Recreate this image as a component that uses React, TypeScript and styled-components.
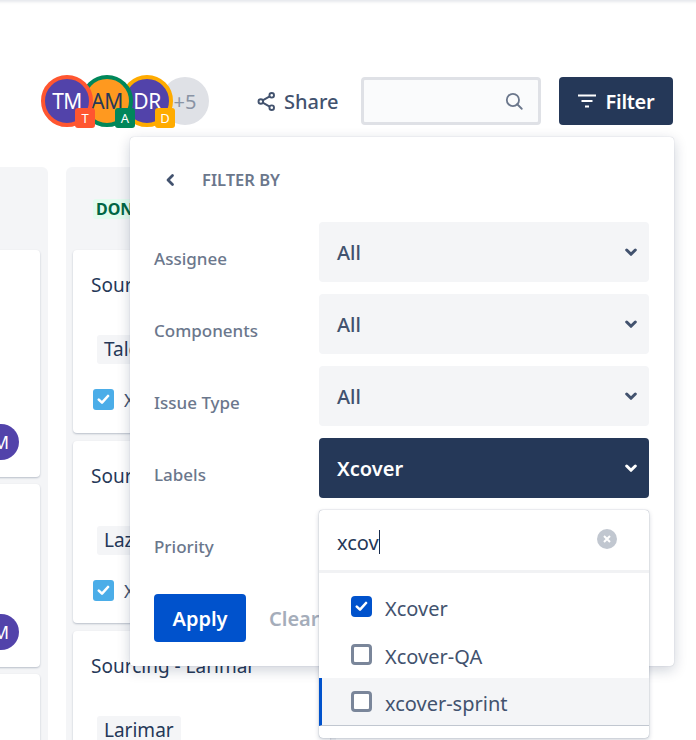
import React from 'react';
import styled, { createGlobalStyle } from 'styled-components';

const GlobalStyle = createGlobalStyle`
	html, body {
		margin: 0;
		padding: 0;
		background: #fff;
		overflow: hidden;
	}
	body {
		font-family: 'Noto Sans', 'Open Sans', sans-serif;
	}
`;

const Page = styled.div`
	position: relative;
	width: 696px;
	height: 740px;
	overflow: hidden;
	background: #fff;
	box-shadow: inset 0 5px 3px -3px rgba(9, 30, 66, 0.1);
`;

const TopBar = styled.div`
	display: flex;
	align-items: center;
	height: 48px;
	padding: 77px 23px 0 41px;
`;

const AvatarGroup = styled.div`
	display: flex;
	align-items: center;
`;

const AvatarRing = styled.div<{ $ring: string; $fill: string; $dark?: boolean; $z: number }>`
	position: relative;
	z-index: ${(p) => p.$z};
	flex: none;
	box-sizing: border-box;
	width: 52px;
	height: 52px;
	margin-right: -12px;
	border: 4px solid ${(p) => p.$ring};
	border-radius: 50%;
	background: ${(p) => p.$fill};
	color: ${(p) => (p.$dark ? '#253858' : '#fff')};
	display: flex;
	align-items: center;
	justify-content: center;
	font-size: 21px;
	letter-spacing: -0.5px;
`;

const AvatarBadge = styled.span<{ $bg: string }>`
	position: absolute;
	right: -6px;
	bottom: -5px;
	width: 20px;
	height: 20px;
	border-radius: 3px;
	background: ${(p) => p.$bg};
	color: #fff;
	font-size: 13px;
	display: flex;
	align-items: center;
	justify-content: center;
	letter-spacing: 0;
`;

const MoreAvatar = styled.div`
	flex: none;
	width: 48px;
	height: 48px;
	border-radius: 50%;
	background: #dfe1e6;
	color: #8993a4;
	font-size: 20px;
	display: flex;
	align-items: center;
	justify-content: center;
`;

const ShareButton = styled.div`
	flex: none;
	box-sizing: border-box;
	width: 152px;
	padding-left: 48px;
	display: flex;
	align-items: center;
	gap: 8px;
	color: #42526e;
	font-size: 20px;
	font-weight: 500;
`;

const SearchBox = styled.div`
	flex: none;
	box-sizing: border-box;
	width: 180px;
	height: 48px;
	padding-right: 15px;
	background: #fafbfc;
	border: 3px solid #dfe1e6;
	border-radius: 4px;
	display: flex;
	align-items: center;
	justify-content: flex-end;
	color: #6b778c;
`;

const FilterButton = styled.div`
	flex: none;
	box-sizing: border-box;
	width: 114px;
	height: 48px;
	margin-left: 18px;
	background: #253858;
	border-radius: 4px;
	color: #fff;
	font-size: 20px;
	font-weight: 600;
	letter-spacing: -0.3px;
	display: flex;
	align-items: center;
	justify-content: center;
	gap: 10px;
`;

const Board = styled.div`
	display: flex;
	gap: 18px;
	margin-top: 42px;
	margin-left: -30px;
`;

const SideColumn = styled.div`
	flex: none;
	box-sizing: border-box;
	width: 78px;
	height: 620px;
	padding: 83px 8px 0 0;
	background: #f4f5f7;
	border-radius: 6px;
	display: flex;
	flex-direction: column;
	gap: 7px;
`;

const MainColumn = styled.div`
	flex: none;
	box-sizing: border-box;
	width: 270px;
	height: 620px;
	padding: 0 6px 0 7px;
	background: #f4f5f7;
	border-radius: 6px;
	display: flex;
	flex-direction: column;
	gap: 8px;
`;

const ColumnTitle = styled.div`
	flex: none;
	height: 75px;
	display: flex;
	align-items: center;
`;

const DoneLozenge = styled.span`
	margin-left: 20px;
	margin-top: 8px;
	padding: 0 3px;
	line-height: 20px;
	background: #e3fcef;
	color: #006644;
	font-size: 16px;
	font-weight: 700;
	border-radius: 3px;
`;

const Card = styled.div<{ $h: number }>`
	flex: none;
	box-sizing: border-box;
	position: relative;
	height: ${(p) => p.$h}px;
	background: #fff;
	border-radius: 4px;
	box-shadow: 0 1px 2px rgba(9, 30, 66, 0.25);
	padding: 20px 18px 0;
	color: #172b4d;
`;

const CardAvatar = styled.span`
	position: absolute;
	right: 21px;
	bottom: 17px;
	width: 36px;
	height: 36px;
	border-radius: 50%;
	background: #5243aa;
	color: #fff;
	font-size: 18px;
	display: flex;
	align-items: center;
	justify-content: center;
`;

const CardTitle = styled.div`
	font-size: 19px;
	line-height: 30px;
	color: #253858;
	white-space: nowrap;
`;

const CardTag = styled.span`
	display: inline-block;
	margin-top: 35px;
	margin-left: 6px;
	padding: 0 7px;
	background: #f4f5f7;
	border-radius: 3px;
	color: #253858;
	font-size: 19px;
	line-height: 29px;
`;

const CardKey = styled.div`
	display: flex;
	align-items: center;
	gap: 10px;
	margin-top: 25px;
	margin-left: 2px;
	height: 21px;
	color: #42526e;
	font-size: 18px;
`;

const StoryCheck = styled.span`
	width: 21px;
	height: 21px;
	border-radius: 3px;
	background: #4bade8;
	color: #fff;
	display: flex;
	align-items: center;
	justify-content: center;
`;

const Popover = styled.div`
	position: absolute;
	left: 130px;
	top: 137px;
	box-sizing: border-box;
	width: 544px;
	height: 529px;
	background: #fff;
	border-radius: 4px;
	box-shadow: 0 0 1px rgba(9, 30, 66, 0.3), 0 4px 14px rgba(9, 30, 66, 0.2);
	padding: 0 24px;
`;

const PopoverHeader = styled.div`
	display: flex;
	align-items: center;
	height: 85px;
	padding-left: 10px;
	gap: 26px;
	color: #42526e;
`;

const PopoverTitle = styled.span`
	color: #6b778c;
	font-size: 16.5px;
	font-weight: 600;
`;

const FieldRow = styled.div`
	display: grid;
	grid-template-columns: 165px 330px;
	align-items: center;
	height: 60px;
	margin-bottom: 12px;
`;

const FieldLabel = styled.span`
	color: #6b778c;
	font-size: 17px;
	font-weight: 500;
	padding-top: 12px;
`;

const SelectBox = styled.div<{ $active?: boolean }>`
	height: 60px;
	box-sizing: border-box;
	padding: 0 12px 0 18px;
	border-radius: 4px;
	background: ${(p) => (p.$active ? '#253858' : '#f4f5f7')};
	color: ${(p) => (p.$active ? '#fff' : '#42526e')};
	font-size: 20px;
	font-weight: ${(p) => (p.$active ? 600 : 500)};
	display: flex;
	align-items: center;
	justify-content: space-between;
`;

const Actions = styled.div`
	display: flex;
	align-items: center;
	gap: 23px;
	margin-top: 24px;
`;

const ApplyButton = styled.div`
	width: 92px;
	height: 48px;
	border-radius: 4px;
	background: #0052cc;
	color: #fff;
	font-size: 20px;
	font-weight: 600;
	display: flex;
	align-items: center;
	justify-content: center;
`;

const ClearButton = styled.div`
	color: #a5adba;
	font-size: 20px;
	font-weight: 600;
`;

const Dropdown = styled.div`
	position: absolute;
	left: 319px;
	top: 510px;
	box-sizing: border-box;
	width: 330px;
	height: 228px;
	background: #fff;
	border-radius: 4px;
	box-shadow: 0 0 1px rgba(9, 30, 66, 0.5), 0 2px 5px rgba(9, 30, 66, 0.2);
`;

const DropdownSearch = styled.div`
	display: flex;
	align-items: center;
	justify-content: space-between;
	height: 60px;
	padding: 0 32px 0 18px;
	border-bottom: 3px solid #f1f2f4;
	color: #253858;
	font-size: 20px;
`;

const TypedText = styled.span`
	display: flex;
	align-items: center;
	margin-top: 4px;
`;

const Caret = styled.span`
	width: 1px;
	height: 24px;
	background: #172b4d;
`;

const ClearIcon = styled.span`
	width: 20px;
	height: 20px;
	margin-top: -2px;
	border-radius: 50%;
	background: #c1c7d0;
	color: #fff;
	display: flex;
	align-items: center;
	justify-content: center;
`;

const OptionList = styled.div`
	padding-top: 9px;
`;

const Option = styled.div<{ $hover?: boolean }>`
	box-sizing: border-box;
	height: 48px;
	display: flex;
	align-items: center;
	gap: 13px;
	padding-left: ${(p) => (p.$hover ? '29px' : '32px')};
	color: #42526e;
	font-size: 20px;
	background: ${(p) => (p.$hover ? '#f4f5f7' : 'transparent')};
	border-left: ${(p) => (p.$hover ? '3px solid #0052cc' : 'none')};
	border-bottom: ${(p) => (p.$hover ? '1px solid #c1c7d0' : 'none')};
`;

const OptionLabel = styled.span`
	margin-top: 4px;
`;

const CheckBox = styled.span<{ $checked?: boolean }>`
	flex: none;
	box-sizing: border-box;
	width: 21px;
	height: 21px;
	border-radius: 4px;
	border: ${(p) => (p.$checked ? 'none' : '3px solid #7a869a')};
	background: ${(p) => (p.$checked ? '#0052cc' : '#fff')};
	color: #fff;
	display: flex;
	align-items: center;
	justify-content: center;
`;

const Tick = () => (
	<svg width='13' height='11' viewBox='0 0 13 11' fill='none'>
		<path d='M1.8 5.6l3.2 3 6-6.6' stroke='currentColor' strokeWidth='2.6' strokeLinecap='round' strokeLinejoin='round' />
	</svg>
);

const Chevron = ({ color }: { color: string }) => (
	<svg width='12' height='9' viewBox='0 0 12 9' fill='none'>
		<path d='M1.700 2l4.300 4.300L10.300 2' stroke={color} strokeWidth='3' strokeLinecap='round' strokeLinejoin='round' />
	</svg>
);

const filters = ['Assignee', 'Components', 'Issue Type'];

const App = () => {
	return (
		<Page>
			<GlobalStyle />
			<TopBar>
				<AvatarGroup>
					<AvatarRing $ring='#ff5630' $fill='#5243aa' $z={3}>
						TM
						<AvatarBadge $bg='#ff5630'>T</AvatarBadge>
					</AvatarRing>
					<AvatarRing $ring='#00875a' $fill='#ff991f' $dark $z={2}>
						AM
						<AvatarBadge $bg='#00875a'>A</AvatarBadge>
					</AvatarRing>
					<AvatarRing $ring='#ffab00' $fill='#5243aa' $z={1}>
						DR
						<AvatarBadge $bg='#ffab00'>D</AvatarBadge>
					</AvatarRing>
					<MoreAvatar>+5</MoreAvatar>
				</AvatarGroup>
				<ShareButton>
					<svg width='19' height='19' viewBox='0 0 20 20' fill='none' stroke='currentColor' strokeWidth='2'>
						<circle cx='4' cy='10' r='2.4' />
						<circle cx='15.5' cy='3.5' r='2.4' />
						<circle cx='15.5' cy='16.5' r='2.4' />
						<path d='M6 8.8l7.4-4.2M6 11.2l7.4 4.2' />
					</svg>
					Share
				</ShareButton>
				<SearchBox>
					<svg width='18' height='18' viewBox='0 0 20 20' fill='none' stroke='currentColor' strokeWidth='2'>
						<circle cx='8.800' cy='8.800' r='6.800' />
						<path d='M13.600 13.600l5 5' strokeLinecap='round' />
					</svg>
				</SearchBox>
				<FilterButton>
					<svg width='18' height='14' viewBox='0 0 18 14' fill='none' stroke='currentColor' strokeWidth='2'>
						<path d='M0 1.500h18M3.500 7h11M7 12.500h4' />
					</svg>
					Filter
				</FilterButton>
			</TopBar>
			<Board>
				<SideColumn>
					<Card $h={227}>
						<CardAvatar>M</CardAvatar>
					</Card>
					<Card $h={183}>
						<CardAvatar>M</CardAvatar>
					</Card>
					<Card $h={160} />
				</SideColumn>
				<MainColumn>
					<ColumnTitle>
						<DoneLozenge>DONE</DoneLozenge>
					</ColumnTitle>
					<Card $h={183}>
						<CardTitle>Sourcing - Talc</CardTitle>
						<CardTag>Talc</CardTag>
						<CardKey>
							<StoryCheck><Tick /></StoryCheck>
							XC-1
						</CardKey>
					</Card>
					<Card $h={182}>
						<CardTitle>Sourcing - Lazurite</CardTitle>
						<CardTag>Lazurite</CardTag>
						<CardKey>
							<StoryCheck><Tick /></StoryCheck>
							XC-2
						</CardKey>
					</Card>
					<Card $h={160}>
						<CardTitle>Sourcing - Larimar</CardTitle>
						<CardTag>Larimar</CardTag>
					</Card>
				</MainColumn>
			</Board>
			<Popover>
				<PopoverHeader>
					<svg width='12' height='14' viewBox='0 0 12 14' fill='none'>
						<path d='M8.500 2.500L4 7l4.500 4.500' stroke='currentColor' strokeWidth='2.800' strokeLinecap='round' strokeLinejoin='round' />
					</svg>
					<PopoverTitle>FILTER BY</PopoverTitle>
				</PopoverHeader>
				{filters.map((label) => (
					<FieldRow key={label}>
						<FieldLabel>{label}</FieldLabel>
						<SelectBox>
							All
							<Chevron color='#42526e' />
						</SelectBox>
					</FieldRow>
				))}
				<FieldRow>
					<FieldLabel>Labels</FieldLabel>
					<SelectBox $active>
						Xcover
						<Chevron color='#fff' />
					</SelectBox>
				</FieldRow>
				<FieldRow>
					<FieldLabel>Priority</FieldLabel>
				</FieldRow>
				<Actions>
					<ApplyButton>Apply</ApplyButton>
					<ClearButton>Clear</ClearButton>
				</Actions>
			</Popover>
			<Dropdown>
				<DropdownSearch>
					<TypedText>
						xcov
						<Caret />
					</TypedText>
					<ClearIcon>
						<svg width='8' height='8' viewBox='0 0 8 8' stroke='currentColor' strokeWidth='2'>
							<path d='M1 1l6 6M7 1L1 7' />
						</svg>
					</ClearIcon>
				</DropdownSearch>
				<OptionList>
					<Option>
						<CheckBox $checked><Tick /></CheckBox>
						<OptionLabel>Xcover</OptionLabel>
					</Option>
					<Option>
						<CheckBox />
						<OptionLabel>Xcover-QA</OptionLabel>
					</Option>
					<Option $hover>
						<CheckBox />
						<OptionLabel>xcover-sprint</OptionLabel>
					</Option>
				</OptionList>
			</Dropdown>
		</Page>
	);
};

export default App;
